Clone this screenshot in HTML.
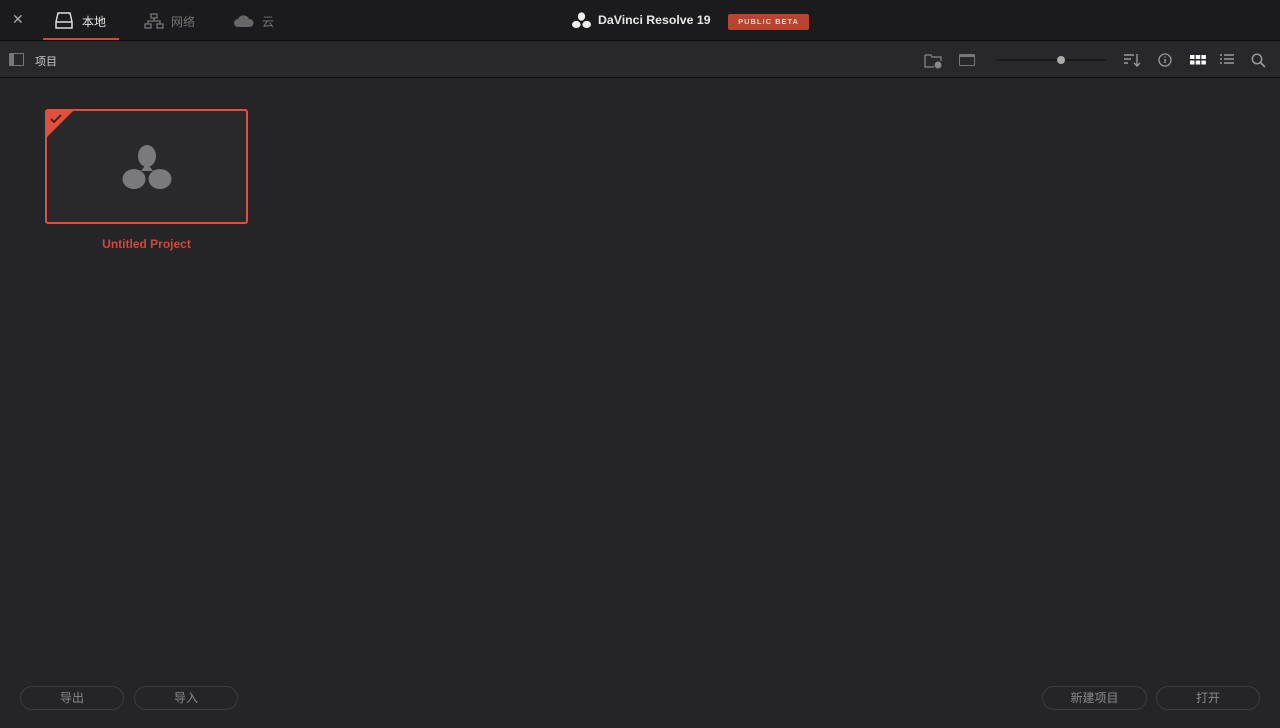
<!DOCTYPE html>
<html><head><meta charset="utf-8"><style>
*{margin:0;padding:0;box-sizing:border-box}
body{width:1280px;height:728px;background:#252528;font-family:"Liberation Sans","Noto Sans CJK SC",sans-serif;position:relative;overflow:hidden;color:#ccc}
.top{position:absolute;left:0;top:0;width:1280px;height:41px;background:#1b1b1d;border-bottom:1px solid #0e0e0f}
.bar{position:absolute;left:0;top:42px;width:1280px;height:36px;background:#28282b;border-bottom:1px solid #111}
.t{position:absolute;font-size:12px}
.btn{position:absolute;top:686px;height:24px;border:1px solid #3c3c40;border-radius:12px;color:#8a8a8e;font-size:12px;text-align:center;line-height:22px}
</style></head><body>
<div class="top">
<div class="t" style="left:12px;top:11px;color:#aaa;font-size:14px">✕</div>
<svg style="position:absolute;left:55px;top:12px" width="18" height="17" viewBox="0 0 18 17"><path d="M3 1h12l2 9v6H1v-6z M1 10h16" fill="none" stroke="#ddd" stroke-width="1.5"/></svg>
<div class="t" style="left:82px;top:13px;color:#e6e6e6">本地</div>
<div style="position:absolute;left:43px;top:38px;width:76px;height:2px;background:#d4473c"></div>
<svg style="position:absolute;left:144px;top:13px" width="20" height="17" viewBox="0 0 20 17"><g fill="none" stroke="#777" stroke-width="1.3"><rect x="7" y="1" width="6" height="4"/><rect x="1" y="11" width="6" height="4"/><rect x="13" y="11" width="6" height="4"/><path d="M10 5v3M4 11V8h12v3"/></g></svg>
<div class="t" style="left:171px;top:13px;color:#777">网络</div>
<svg style="position:absolute;left:233px;top:14px" width="22" height="14" viewBox="0 0 22 14"><path d="M5 13a4 4 0 0 1 0-8a6 6 0 0 1 11 0a4 4 0 0 1 1 8z" fill="#666"/></svg>
<div class="t" style="left:262px;top:13px;color:#777">云</div>
<svg style="position:absolute;left:572px;top:12px" width="19" height="17" viewBox="0 0 19 17"><g fill="#eee"><ellipse cx="9.5" cy="4.5" rx="3.6" ry="4.3"/><ellipse cx="4.3" cy="12.5" rx="4.3" ry="3.6"/><ellipse cx="14.7" cy="12.5" rx="4.3" ry="3.6"/></g></svg>
<div class="t" style="left:598px;top:13px;color:#e8e8e8;font-size:12.3px;font-weight:bold">DaVinci Resolve 19</div>
<div style="position:absolute;left:728px;top:14px;width:81px;height:16px;background:#b8432f;border-radius:2px;color:#f0d0c8;font-size:7.5px;font-weight:bold;letter-spacing:1px;text-align:center;line-height:16px">PUBLIC BETA</div>
</div>
<div class="bar">
<div style="position:absolute;left:9px;top:11px;width:15px;height:13px;border:1px solid #777;border-left-width:5px;border-radius:1px"></div>
<div class="t" style="left:35px;top:11px;color:#ccc;font-size:11px">项目</div>
<svg style="position:absolute;left:924px;top:11px" width="20" height="16" viewBox="0 0 20 16"><path d="M1 2h6l1 2h9v4M1 2v12h9" fill="none" stroke="#888" stroke-width="1.2"/><circle cx="14" cy="12" r="3.5" fill="#888"/></svg>
<div style="position:absolute;left:959px;top:12px;width:16px;height:12px;border:1.3px solid #777;border-top-width:3px;border-radius:1px"></div>
<div style="position:absolute;left:996px;top:17px;width:110px;height:2px;background:#1a1a1c"></div>
<div style="position:absolute;left:1057px;top:14px;width:8px;height:8px;border-radius:50%;background:#aaa"></div>
<svg style="position:absolute;left:1123px;top:11px" width="18" height="14" viewBox="0 0 18 14"><path d="M1 2h10M1 6h7M1 10h4M14 1v12M11 10l3 3 3-3" fill="none" stroke="#999" stroke-width="1.4"/></svg>
<svg style="position:absolute;left:1158px;top:11px" width="14" height="14" viewBox="0 0 14 14"><circle cx="7" cy="7" r="6" fill="none" stroke="#999" stroke-width="1.3"/><path d="M7 6v4M7 3.5v1" stroke="#999" stroke-width="1.5"/></svg>
<svg style="position:absolute;left:1190px;top:13px" width="16" height="10" viewBox="0 0 16 10"><g fill="#fff"><rect x="0" y="0" width="4.5" height="4"/><rect x="5.7" y="0" width="4.5" height="4"/><rect x="11.4" y="0" width="4.5" height="4"/><rect x="0" y="5.5" width="4.5" height="4"/><rect x="5.7" y="5.5" width="4.5" height="4"/><rect x="11.4" y="5.5" width="4.5" height="4"/></g></svg>
<svg style="position:absolute;left:1220px;top:12px" width="14" height="12" viewBox="0 0 14 12"><path d="M0 1h2M4 1h10M0 5h2M4 5h10M0 9h2M4 9h10" stroke="#999" stroke-width="1.4"/></svg>
<svg style="position:absolute;left:1251px;top:11px" width="15" height="15" viewBox="0 0 15 15"><circle cx="6" cy="6" r="4.7" fill="none" stroke="#999" stroke-width="1.5"/><path d="M9.5 9.5l4.5 4.5" stroke="#999" stroke-width="1.7"/></svg>
</div>
<div style="position:absolute;left:45px;top:109px;width:203px;height:115px;border:2px solid #e0503f;border-radius:3px;background:#29292c;overflow:hidden">
<div style="position:absolute;left:0;top:0;width:0;height:0;border-top:26px solid #e0503f;border-right:26px solid transparent"></div>
<svg style="position:absolute;left:3px;top:3px" width="14" height="10" viewBox="0 0 14 10"><path d="M1 5l3 3 7-7" fill="none" stroke="#3a1d19" stroke-width="1.8"/></svg>
<svg style="position:absolute;left:74px;top:34px" width="52" height="47" viewBox="0 0 52 47"><g fill="#7a7a7c"><ellipse cx="26" cy="11" rx="9" ry="11"/><path d="M26 18L20 26 32 26z"/><ellipse cx="13" cy="34" rx="11.5" ry="10"/><ellipse cx="39" cy="34" rx="11.5" ry="10"/></g></svg>
</div>
<div class="t" style="left:45px;top:237px;width:203px;text-align:center;color:#d2483c;font-weight:bold;font-size:12px">Untitled Project</div>
<div class="btn" style="left:20px;width:104px">导出</div>
<div class="btn" style="left:134px;width:104px">导入</div>
<div class="btn" style="left:1042px;width:105px">新建项目</div>
<div class="btn" style="left:1156px;width:104px">打开</div>
</body></html>
